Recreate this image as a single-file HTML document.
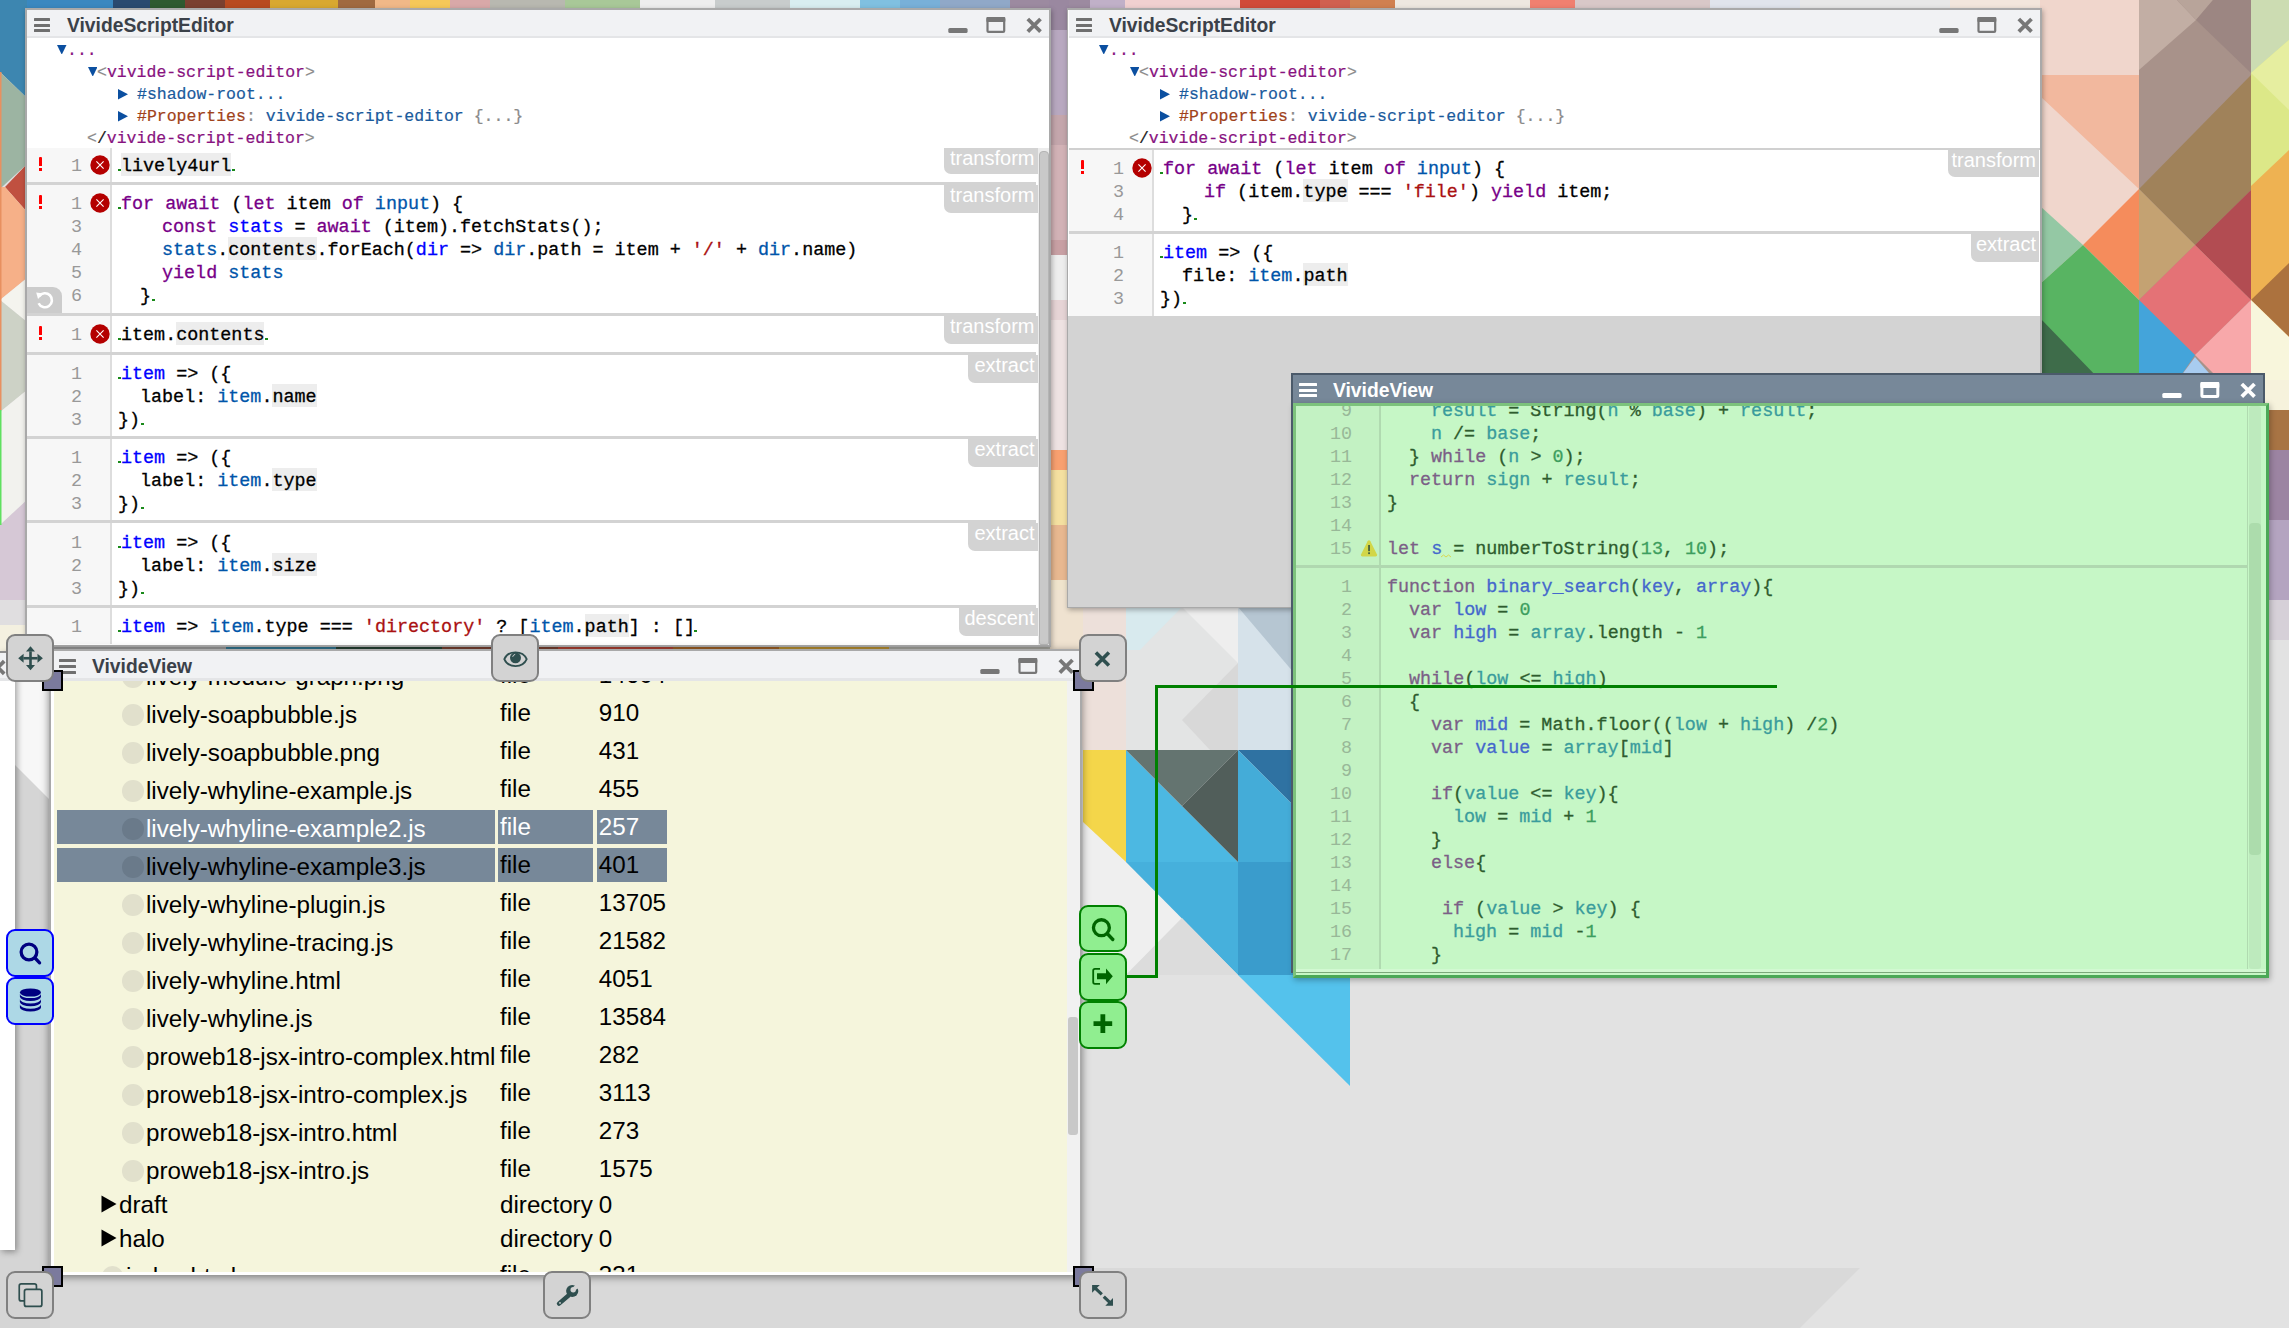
<!DOCTYPE html><html><head><meta charset="utf-8"><style>html,body{margin:0;padding:0;}body{width:2289px;height:1328px;overflow:hidden;position:relative;background:#e2e2e2;}.a{position:absolute;}.cl{position:absolute;font-family:'Liberation Mono',monospace;font-size:18.4px;line-height:23px;white-space:pre;color:#000;}.cl span{display:inline-block;line-height:23px;-webkit-text-stroke:0.3px currentColor;}.ins{position:absolute;font-family:'Liberation Mono',monospace;font-size:16.5px;line-height:22px;white-space:pre;-webkit-text-stroke:0.2px currentColor;}.row{position:absolute;font-family:'Liberation Sans',sans-serif;font-size:24.2px;line-height:38px;white-space:pre;}.ttl{position:absolute;font-family:'Liberation Sans',sans-serif;font-weight:bold;font-size:19.3px;line-height:26px;white-space:pre;}.lbl{position:absolute;height:26px;background:#d3d3d3;border-bottom-left-radius:7px;color:#fff;font-family:'Liberation Sans',sans-serif;font-size:20px;line-height:20px;padding-top:0px;text-align:right;box-sizing:border-box;padding-right:3px;white-space:pre;}</style></head><body>
<svg class="a" style="left:0;top:0" width="2289" height="1328" viewBox="0 0 2289 1328"><rect x="0" y="0" width="2289" height="1328" fill="#e2e2e2"/>
<polygon points="0,1268 1860,1268 1800,1328 0,1328" fill="#d9d9d9"/>
<rect x="0" y="651" width="50" height="677" fill="#d5d5d5"/>
<polygon points="15,651 50,651 50,800 15,765" fill="#f7f7f7"/>
<rect x="0" y="0" width="113" height="12" fill="#3a88c0"/>
<rect x="113" y="0" width="37" height="12" fill="#2a4a70"/>
<rect x="150" y="0" width="35" height="12" fill="#2e5a30"/>
<rect x="185" y="0" width="40" height="12" fill="#7a4030"/>
<rect x="225" y="0" width="45" height="12" fill="#b84a20"/>
<rect x="270" y="0" width="68" height="12" fill="#d8a830"/>
<rect x="338" y="0" width="37" height="12" fill="#a06a40"/>
<rect x="375" y="0" width="35" height="12" fill="#f0b888"/>
<rect x="410" y="0" width="40" height="12" fill="#f5c858"/>
<rect x="450" y="0" width="40" height="12" fill="#d8a8a8"/>
<rect x="490" y="0" width="75" height="12" fill="#b8b8b0"/>
<rect x="565" y="0" width="75" height="12" fill="#a8c898"/>
<rect x="640" y="0" width="75" height="12" fill="#eeeeee"/>
<rect x="715" y="0" width="75" height="12" fill="#c8cccc"/>
<rect x="790" y="0" width="70" height="12" fill="#d8eef0"/>
<rect x="860" y="0" width="40" height="12" fill="#80c0e0"/>
<rect x="900" y="0" width="40" height="12" fill="#78b0d8"/>
<rect x="940" y="0" width="70" height="12" fill="#90a8c8"/>
<rect x="1010" y="0" width="80" height="12" fill="#9c8aa0"/>
<rect x="1090" y="0" width="35" height="12" fill="#c0b0c8"/>
<rect x="1125" y="0" width="115" height="12" fill="#f0d0d0"/>
<rect x="1240" y="0" width="80" height="12" fill="#d04a38"/>
<rect x="1320" y="0" width="30" height="12" fill="#d06050"/>
<rect x="1350" y="0" width="45" height="12" fill="#d08050"/>
<rect x="1395" y="0" width="135" height="12" fill="#eee8e0"/>
<rect x="1530" y="0" width="45" height="12" fill="#f08070"/>
<rect x="1575" y="0" width="135" height="12" fill="#d8c8c8"/>
<rect x="1710" y="0" width="90" height="12" fill="#e0e4ec"/>
<rect x="1800" y="0" width="150" height="12" fill="#e8e8e8"/>
<rect x="1950" y="0" width="190" height="12" fill="#f2e6dc"/>
<rect x="2140" y="0" width="110" height="12" fill="#b0988e"/>
<rect x="2250" y="0" width="39" height="12" fill="#d8e8b8"/>
<rect x="0" y="0" width="27" height="651" fill="#e0dee0"/>
<polygon points="0,0 27,0 27,98 0,72" fill="#3d86b0"/>
<polygon points="0,72 27,98 27,164 2,187 0,187" fill="#9cb4a2"/>
<polygon points="27,164 5,187 27,212" fill="#c05040"/>
<polygon points="0,187 5,187 27,212 27,278 0,300" fill="#f6b088"/>
<polygon points="27,278 0,300 27,322" fill="#f4f4ee"/>
<polygon points="0,300 27,322 27,390 0,412" fill="#cdd2c6"/>
<polygon points="0,412 27,390 27,500 0,525" fill="#f2f2ee"/>
<polygon points="0,525 27,500 27,600 0,600" fill="#d6c8d6"/>
<rect x="0" y="625" width="27" height="26" fill="#f4f0e0"/>
<rect x="0" y="72" width="1.5" height="338" fill="#e89060"/>
<rect x="0" y="410" width="1.5" height="115" fill="#60e060"/>
<rect x="1049" y="0" width="20" height="30" fill="#9a88a0"/>
<rect x="1049" y="30" width="20" height="85" fill="#b8a8c0"/>
<rect x="1049" y="115" width="20" height="30" fill="#c4a6ac"/>
<rect x="1049" y="145" width="20" height="95" fill="#d2b2b6"/>
<rect x="1049" y="240" width="20" height="15" fill="#c8a0a4"/>
<rect x="1049" y="255" width="20" height="45" fill="#eeeeee"/>
<rect x="1049" y="300" width="20" height="20" fill="#e6d4d6"/>
<rect x="1049" y="320" width="20" height="130" fill="#eee2e2"/>
<rect x="1049" y="450" width="20" height="20" fill="#f8a070"/>
<rect x="1049" y="470" width="20" height="55" fill="#f4e0a0"/>
<rect x="1049" y="525" width="20" height="55" fill="#e8b890"/>
<rect x="1049" y="580" width="20" height="71" fill="#efe4cc"/>
<rect x="25" y="645" width="201" height="6" fill="#b4b4b4"/>
<rect x="226" y="645" width="110" height="6" fill="#3a88a8"/>
<rect x="336" y="645" width="106" height="6" fill="#2a4a3a"/>
<rect x="442" y="645" width="116" height="6" fill="#8a4a38"/>
<rect x="558" y="645" width="115" height="6" fill="#c84a3a"/>
<rect x="673" y="645" width="106" height="6" fill="#b8702a"/>
<rect x="779" y="645" width="110" height="6" fill="#d8a838"/>
<rect x="889" y="645" width="162" height="6" fill="#c0c0b8"/>
<rect x="2040" y="0" width="99" height="380" fill="#f0d6cc"/>
<polygon points="2040,75 2139,75 2139,189 2040,96" fill="#f2b89e"/>
<polygon points="2040,206 2083,245 2040,284" fill="#94c8a4"/>
<polygon points="2083,245 2139,189 2139,300" fill="#f58c5c"/>
<polygon points="2040,284 2083,245 2139,300 2139,380 2040,380" fill="#58b462"/>
<polygon points="2040,318 2100,380 2040,380" fill="#3e6c4a"/>
<rect x="2139" y="0" width="112" height="380" fill="#a8928a"/>
<polygon points="2139,0 2177,0 2196,20 2139,70" fill="#c2aea4"/>
<polygon points="2177,0 2213,0 2196,20" fill="#b8a49a"/>
<polygon points="2196,20 2213,0 2251,0 2251,73" fill="#9c8682"/>
<polygon points="2139,189 2251,75 2251,190 2195,245" fill="#a0825a"/>
<polygon points="2139,189 2195,245 2139,300" fill="#c4a272"/>
<polygon points="2195,245 2251,190 2251,300" fill="#b24c52"/>
<polygon points="2139,300 2195,245 2251,300 2195,355" fill="#e47276"/>
<polygon points="2139,300 2195,355 2178,380 2139,380" fill="#44a4da"/>
<polygon points="2195,355 2251,300 2251,380 2220,380" fill="#f8a8aa"/>
<polygon points="2178,380 2195,357 2215,380" fill="#a8ccf0"/>
<rect x="2251" y="0" width="38" height="380" fill="#dce888"/>
<polygon points="2251,0 2289,0 2289,40 2251,73" fill="#ccdcb2"/>
<polygon points="2251,73 2289,40 2289,110" fill="#e6eea0"/>
<polygon points="2251,186 2289,150 2289,380 2251,300" fill="#eeb252"/>
<polygon points="2251,300 2289,263 2289,337" fill="#ac723e"/>
<polygon points="2251,300 2289,337 2289,380 2251,380" fill="#f8f6dc"/>
<rect x="2265" y="380" width="24" height="30" fill="#f6f2dc"/>
<rect x="2265" y="410" width="24" height="40" fill="#a87444"/>
<rect x="2265" y="450" width="24" height="70" fill="#9c84a2"/>
<rect x="2265" y="520" width="24" height="80" fill="#b4a4c0"/>
<rect x="2265" y="600" width="24" height="40" fill="#d6d0d8"/>
<rect x="1050" y="590" width="250" height="160" fill="#e3e4e4"/>
<polygon points="1050,590 1126,590 1126,750 1083,750" fill="#ede0da"/>
<rect x="1050" y="590" width="33" height="60" fill="#efe2d0"/>
<polygon points="1126,607 1182,607 1140,650 1126,650" fill="#d8eaee"/>
<polygon points="1182,607 1238,607 1238,663" fill="#eeeeee"/>
<polygon points="1238,607 1300,607 1300,750 1238,750" fill="#d6e2ea"/>
<polygon points="1238,607 1300,607 1300,680" fill="#b6c6d2"/>
<polygon points="1182,720 1238,663 1238,750 1210,750" fill="#d8d8d8"/>
<rect x="1083" y="750" width="43" height="112" fill="#f4d64a"/>
<polygon points="1083,822 1126,862 1182,918 1126,975 1083,975" fill="#efefef"/>
<polygon points="1126,750 1126,862 1238,862" fill="#4cb8e2"/>
<polygon points="1126,750 1238,750 1182,806" fill="#647470"/>
<polygon points="1182,806 1238,750 1238,862" fill="#515e5a"/>
<polygon points="1238,750 1350,750 1350,862" fill="#2f72a2"/>
<polygon points="1238,750 1238,862 1350,862" fill="#44acd8"/>
<polygon points="1126,862 1238,862 1238,975" fill="#46b0dc"/>
<polygon points="1238,862 1350,862 1350,975 1238,975" fill="#3a9ccc"/>
<polygon points="1238,975 1350,975 1350,1086" fill="#54c2ec"/>
<polygon points="1182,918 1238,975 1126,975" fill="#dcdcdc"/></svg>
<div class="a" style="left:0px;top:651px;width:15px;height:599px;background:#ffffff;box-shadow:2px 2px 6px rgba(0,0,0,0.35);"></div>
<div class="a" style="left:0px;top:651px;width:15px;height:1.6000000000000227px;background:#8f8f8f;"></div>
<div class="a" style="left:0px;top:652.6px;width:15px;height:25.399999999999977px;background:#f1f2f4;"></div>
<div class="a" style="left:0px;top:678px;width:15px;height:3px;background:#e4e5e7;"></div>
<svg class="a" style="left:-10px;top:659px" width="18" height="18" viewBox="0 0 18 18"><path d="M1.5 2.2 L14.2 14.8 M14.2 2.2 L1.5 14.8" stroke="#777" stroke-width="3.8"/></svg>
<div class="a" style="left:25px;top:8px;width:1026px;height:639px;background:#a9a9a9;box-shadow:1px 2px 5px rgba(0,0,0,0.3);"></div>
<div class="a" style="left:27px;top:10px;width:1022px;height:635px;background:#ffffff;"></div>
<div class="a" style="left:27px;top:10px;width:1022px;height:26px;background:#f1f2f4;"></div>
<div class="a" style="left:27px;top:36px;width:1022px;height:2px;background:#e4e5e7;"></div>
<div class="a" style="left:34px;top:18px;width:16.299999999999997px;height:3px;background:#6f6f6f;border-radius:0.5px;"></div>
<div class="a" style="left:34px;top:23.6px;width:16.299999999999997px;height:3.0px;background:#6f6f6f;border-radius:0.5px;"></div>
<div class="a" style="left:34px;top:29.2px;width:16.299999999999997px;height:3.0000000000000036px;background:#6f6f6f;border-radius:0.5px;"></div>
<div class="ttl" style="left:67px;top:13px;color:#3b4149">VivideScriptEditor</div>
<svg class="a" style="left:945px;top:8px" width="106" height="28" viewBox="0 0 106 28"><rect x="3.3" y="20" width="19.3" height="5" rx="1.6" fill="#777777"/><rect x="42.5" y="10.1" width="16.7" height="13.8" rx="1" fill="none" stroke="#777777" stroke-width="2.2"/><rect x="41.4" y="9" width="18.9" height="5.0" rx="1" fill="#777777"/><path d="M82.8 11 L95.5 23.6 M95.5 11 L82.8 23.6" stroke="#777777" stroke-width="3.8"/></svg>
<svg class="a" style="left:57.3px;top:44.8px" width="9.5" height="9.7" viewBox="0 0 9.5 9.7"><path d="M0 0 L9.5 0 L4.75 9.7 Z" fill="#0b4fa0"/></svg>
<div class="ins" style="left:67px;top:40px"><span style="color:#881280;">...</span></div>
<svg class="a" style="left:87.7px;top:66.8px" width="9.5" height="9.7" viewBox="0 0 9.5 9.7"><path d="M0 0 L9.5 0 L4.75 9.7 Z" fill="#0b4fa0"/></svg>
<div class="ins" style="left:97px;top:62px"><span style="color:#8a8a8a;">&lt;</span><span style="color:#881280;">vivide-script-editor</span><span style="color:#8a8a8a;">&gt;</span></div>
<svg class="a" style="left:117.5px;top:89px" width="10" height="10.6" viewBox="0 0 10 10.6"><path d="M0 0 L10 5.3 L0 10.6 Z" fill="#0b4fa0"/></svg>
<div class="ins" style="left:137px;top:84px"><span style="color:#1a5a9c;">#shadow-root...</span></div>
<svg class="a" style="left:117.5px;top:111px" width="10" height="10.6" viewBox="0 0 10 10.6"><path d="M0 0 L10 5.3 L0 10.6 Z" fill="#0b4fa0"/></svg>
<div class="ins" style="left:137px;top:106px"><span style="color:#a0421a;">#Properties</span><span style="color:#8a8a8a;">: </span><span style="color:#1a5a9c;">vivide-script-editor</span><span style="color:#8a8a8a;"> {...}</span></div>
<div class="ins" style="left:87px;top:128px"><span style="color:#8a8a8a;">&lt;</span><span style="color:#222;">/</span><span style="color:#881280;">vivide-script-editor</span><span style="color:#8a8a8a;">&gt;</span></div>
<div class="a" style="left:27px;top:148px;width:83px;height:34px;background:#f7f7f7;"></div>
<div class="a" style="left:110px;top:148px;width:2px;height:34px;background:#dddddd;"></div>
<div class="a" style="left:27px;top:182px;width:1009px;height:3px;background:#d3d3d3;"></div>
<div class="cl" style="left:22px;width:60px;text-align:right;top:155px;color:#999999">1</div>
<div class="a" style="left:118px;top:169.4px;width:3px;height:1.5999999999999943px;background:#1a8a1a;"></div>
<div class="cl" style="left:121px;top:155px"><span style="color:#000000;background:#ededed;height:21px;box-shadow:0 -2px 0 #ededed;">lively4url</span></div>
<div class="a" style="left:232px;top:169.4px;width:3px;height:1.5999999999999943px;background:#1a8a1a;"></div>
<div class="a" style="left:39px;top:157px;width:3px;height:9px;background:#ff0000;border-radius:1px 1px 0 0;"></div>
<div class="a" style="left:39px;top:168px;width:3px;height:3px;background:#ff0000;"></div>
<svg class="a" style="left:89.7px;top:155px" width="20" height="20" viewBox="0 0 20 20"><circle cx="10" cy="10" r="9.7" fill="#b40000"/><path d="M6.4 6.4 L13.6 13.6 M13.6 6.4 L6.4 13.6" stroke="#fff" stroke-width="1.1"/></svg>
<div class="lbl" style="left:944.0px;top:148px;width:93.5px;height:26px">transform</div>
<div class="a" style="left:27px;top:185px;width:83px;height:128px;background:#f7f7f7;"></div>
<div class="a" style="left:110px;top:185px;width:2px;height:128px;background:#dddddd;"></div>
<div class="a" style="left:27px;top:313px;width:1009px;height:3px;background:#d3d3d3;"></div>
<div class="cl" style="left:22px;width:60px;text-align:right;top:193px;color:#999999">1</div>
<div class="a" style="left:118px;top:207.4px;width:3px;height:1.5999999999999943px;background:#1a8a1a;"></div>
<div class="cl" style="left:121px;top:193px"><span style="color:#770088;">for</span><span style="color:#770088;"> await</span><span style="color:#000000;"> (</span><span style="color:#770088;">let</span><span style="color:#000000;"> item </span><span style="color:#770088;">of</span><span style="color:#000000;"> </span><span style="color:#0055aa;">input</span><span style="color:#000000;">) {</span></div>
<div class="cl" style="left:22px;width:60px;text-align:right;top:216px;color:#999999">3</div>
<div class="cl" style="left:162px;top:216px"><span style="color:#770088;">const</span><span style="color:#000000;"> </span><span style="color:#0000ff;">stats</span><span style="color:#000000;"> = </span><span style="color:#770088;">await</span><span style="color:#000000;"> (item).fetchStats();</span></div>
<div class="cl" style="left:22px;width:60px;text-align:right;top:239px;color:#999999">4</div>
<div class="cl" style="left:162px;top:239px"><span style="color:#0055aa;">stats</span><span style="color:#000000;">.</span><span style="color:#000000;background:#ededed;height:21px;box-shadow:0 -2px 0 #ededed;">contents</span><span style="color:#000000;">.forEach(</span><span style="color:#0000ff;">dir</span><span style="color:#000000;"> =&gt; </span><span style="color:#0055aa;">dir</span><span style="color:#000000;">.path = item + </span><span style="color:#aa1111;">'/'</span><span style="color:#000000;"> + </span><span style="color:#0055aa;">dir</span><span style="color:#000000;">.name)</span></div>
<div class="cl" style="left:22px;width:60px;text-align:right;top:262px;color:#999999">5</div>
<div class="cl" style="left:162px;top:262px"><span style="color:#770088;">yield</span><span style="color:#000000;"> </span><span style="color:#0055aa;">stats</span></div>
<div class="cl" style="left:22px;width:60px;text-align:right;top:285px;color:#999999">6</div>
<div class="cl" style="left:140px;top:285px"><span style="color:#000000;">}</span></div>
<div class="a" style="left:152px;top:299.4px;width:3px;height:1.6000000000000227px;background:#1a8a1a;"></div>
<div class="a" style="left:39px;top:195px;width:3px;height:9px;background:#ff0000;border-radius:1px 1px 0 0;"></div>
<div class="a" style="left:39px;top:206px;width:3px;height:3px;background:#ff0000;"></div>
<svg class="a" style="left:89.7px;top:193px" width="20" height="20" viewBox="0 0 20 20"><circle cx="10" cy="10" r="9.7" fill="#b40000"/><path d="M6.4 6.4 L13.6 13.6 M13.6 6.4 L6.4 13.6" stroke="#fff" stroke-width="1.1"/></svg>
<div class="lbl" style="left:944.0px;top:185px;width:93.5px;height:28px">transform</div>
<div class="a" style="left:27px;top:287px;width:35px;height:26px;background:#cccccc;border-top-right-radius:9px;"></div>
<svg class="a" style="left:34px;top:289px" width="22" height="22" viewBox="0 0 22 22"><path d="M5.2 7.2 A7 7 0 1 1 4.6 14.2" fill="none" stroke="#fff" stroke-width="2.6"/><path d="M2.2 3.6 L9.4 4.4 L4.0 10.0 Z" fill="#fff"/></svg>
<div class="a" style="left:27px;top:316px;width:83px;height:36px;background:#f7f7f7;"></div>
<div class="a" style="left:110px;top:316px;width:2px;height:36px;background:#dddddd;"></div>
<div class="a" style="left:27px;top:352px;width:1009px;height:3px;background:#d3d3d3;"></div>
<div class="cl" style="left:22px;width:60px;text-align:right;top:324px;color:#999999">1</div>
<div class="a" style="left:118px;top:338.4px;width:3px;height:1.6000000000000227px;background:#1a8a1a;"></div>
<div class="cl" style="left:121px;top:324px"><span style="color:#000000;">item.</span><span style="color:#000000;background:#ededed;height:21px;box-shadow:0 -2px 0 #ededed;">contents</span></div>
<div class="a" style="left:265px;top:338.4px;width:3px;height:1.6000000000000227px;background:#1a8a1a;"></div>
<div class="a" style="left:39px;top:326px;width:3px;height:9px;background:#ff0000;border-radius:1px 1px 0 0;"></div>
<div class="a" style="left:39px;top:337px;width:3px;height:3px;background:#ff0000;"></div>
<svg class="a" style="left:89.7px;top:324px" width="20" height="20" viewBox="0 0 20 20"><circle cx="10" cy="10" r="9.7" fill="#b40000"/><path d="M6.4 6.4 L13.6 13.6 M13.6 6.4 L6.4 13.6" stroke="#fff" stroke-width="1.1"/></svg>
<div class="lbl" style="left:944.0px;top:316px;width:93.5px;height:28px">transform</div>
<div class="a" style="left:27px;top:355px;width:83px;height:81px;background:#f7f7f7;"></div>
<div class="a" style="left:110px;top:355px;width:2px;height:81px;background:#dddddd;"></div>
<div class="a" style="left:27px;top:436px;width:1009px;height:3px;background:#d3d3d3;"></div>
<div class="cl" style="left:22px;width:60px;text-align:right;top:363px;color:#999999">1</div>
<div class="a" style="left:118px;top:377.4px;width:3px;height:1.6000000000000227px;background:#1a8a1a;"></div>
<div class="cl" style="left:121px;top:363px"><span style="color:#0000ff;">item</span><span style="color:#000000;"> =&gt; ({</span></div>
<div class="cl" style="left:22px;width:60px;text-align:right;top:386px;color:#999999">2</div>
<div class="cl" style="left:140px;top:386px"><span style="color:#000000;">label: </span><span style="color:#0055aa;">item</span><span style="color:#000000;">.</span><span style="color:#000000;background:#ededed;height:21px;box-shadow:0 -2px 0 #ededed;">name</span></div>
<div class="cl" style="left:22px;width:60px;text-align:right;top:409px;color:#999999">3</div>
<div class="cl" style="left:118px;top:409px"><span style="color:#000000;">})</span></div>
<div class="a" style="left:141px;top:423.4px;width:3px;height:1.6000000000000227px;background:#1a8a1a;"></div>
<div class="lbl" style="left:968.0px;top:355px;width:69.5px;height:28px">extract</div>
<div class="a" style="left:27px;top:439px;width:83px;height:81px;background:#f7f7f7;"></div>
<div class="a" style="left:110px;top:439px;width:2px;height:81px;background:#dddddd;"></div>
<div class="a" style="left:27px;top:520px;width:1009px;height:3px;background:#d3d3d3;"></div>
<div class="cl" style="left:22px;width:60px;text-align:right;top:447px;color:#999999">1</div>
<div class="a" style="left:118px;top:461.4px;width:3px;height:1.6000000000000227px;background:#1a8a1a;"></div>
<div class="cl" style="left:121px;top:447px"><span style="color:#0000ff;">item</span><span style="color:#000000;"> =&gt; ({</span></div>
<div class="cl" style="left:22px;width:60px;text-align:right;top:470px;color:#999999">2</div>
<div class="cl" style="left:140px;top:470px"><span style="color:#000000;">label: </span><span style="color:#0055aa;">item</span><span style="color:#000000;">.</span><span style="color:#000000;background:#ededed;height:21px;box-shadow:0 -2px 0 #ededed;">type</span></div>
<div class="cl" style="left:22px;width:60px;text-align:right;top:493px;color:#999999">3</div>
<div class="cl" style="left:118px;top:493px"><span style="color:#000000;">})</span></div>
<div class="a" style="left:141px;top:507.4px;width:3px;height:1.6000000000000227px;background:#1a8a1a;"></div>
<div class="lbl" style="left:968.0px;top:439px;width:69.5px;height:28px">extract</div>
<div class="a" style="left:27px;top:523px;width:83px;height:82px;background:#f7f7f7;"></div>
<div class="a" style="left:110px;top:523px;width:2px;height:82px;background:#dddddd;"></div>
<div class="a" style="left:27px;top:605px;width:1009px;height:3px;background:#d3d3d3;"></div>
<div class="cl" style="left:22px;width:60px;text-align:right;top:532px;color:#999999">1</div>
<div class="a" style="left:118px;top:546.4px;width:3px;height:1.6000000000000227px;background:#1a8a1a;"></div>
<div class="cl" style="left:121px;top:532px"><span style="color:#0000ff;">item</span><span style="color:#000000;"> =&gt; ({</span></div>
<div class="cl" style="left:22px;width:60px;text-align:right;top:555px;color:#999999">2</div>
<div class="cl" style="left:140px;top:555px"><span style="color:#000000;">label: </span><span style="color:#0055aa;">item</span><span style="color:#000000;">.</span><span style="color:#000000;background:#ededed;height:21px;box-shadow:0 -2px 0 #ededed;">size</span></div>
<div class="cl" style="left:22px;width:60px;text-align:right;top:578px;color:#999999">3</div>
<div class="cl" style="left:118px;top:578px"><span style="color:#000000;">})</span></div>
<div class="a" style="left:141px;top:592.4px;width:3px;height:1.6000000000000227px;background:#1a8a1a;"></div>
<div class="lbl" style="left:968.0px;top:523px;width:69.5px;height:28px">extract</div>
<div class="a" style="left:27px;top:608px;width:83px;height:36px;background:#f7f7f7;"></div>
<div class="a" style="left:110px;top:608px;width:2px;height:36px;background:#dddddd;"></div>
<div class="cl" style="left:22px;width:60px;text-align:right;top:616px;color:#999999">1</div>
<div class="a" style="left:118px;top:630.4px;width:3px;height:1.6000000000000227px;background:#1a8a1a;"></div>
<div class="cl" style="left:121px;top:616px"><span style="color:#0000ff;">item</span><span style="color:#000000;"> =&gt; </span><span style="color:#0055aa;">item</span><span style="color:#000000;">.type === </span><span style="color:#aa1111;">'directory'</span><span style="color:#000000;"> ? [</span><span style="color:#0055aa;">item</span><span style="color:#000000;">.</span><span style="color:#000000;background:#ededed;height:21px;box-shadow:0 -2px 0 #ededed;">path</span><span style="color:#000000;">] : []</span></div>
<div class="a" style="left:694px;top:630.4px;width:3px;height:1.6000000000000227px;background:#1a8a1a;"></div>
<div class="lbl" style="left:959.0px;top:608px;width:78.5px;height:28px">descent</div>
<div class="a" style="left:1037.5px;top:148px;width:11.5px;height:497px;background:#ececec;"></div>
<div class="a" style="left:1038.5px;top:151px;width:10.5px;height:494px;background:#c9c9c9;border:1px solid #b4b4b4;border-radius:4px 4px 2px 2px;box-sizing:border-box;"></div>
<div class="a" style="left:1067px;top:8px;width:975px;height:600px;background:#a9a9a9;box-shadow:1px 2px 5px rgba(0,0,0,0.3);"></div>
<div class="a" style="left:1068px;top:10px;width:972px;height:597px;background:#ffffff;"></div>
<div class="a" style="left:1069px;top:10px;width:971px;height:26px;background:#f1f2f4;"></div>
<div class="a" style="left:1069px;top:36px;width:971px;height:2px;background:#e4e5e7;"></div>
<div class="a" style="left:1076px;top:18px;width:16.299999999999955px;height:3px;background:#6f6f6f;border-radius:0.5px;"></div>
<div class="a" style="left:1076px;top:23.6px;width:16.299999999999955px;height:3.0px;background:#6f6f6f;border-radius:0.5px;"></div>
<div class="a" style="left:1076px;top:29.2px;width:16.299999999999955px;height:3.0000000000000036px;background:#6f6f6f;border-radius:0.5px;"></div>
<div class="ttl" style="left:1109px;top:13px;color:#3b4149">VivideScriptEditor</div>
<svg class="a" style="left:1936px;top:8px" width="106" height="28" viewBox="0 0 106 28"><rect x="3.3" y="20" width="19.3" height="5" rx="1.6" fill="#777777"/><rect x="42.5" y="10.1" width="16.7" height="13.8" rx="1" fill="none" stroke="#777777" stroke-width="2.2"/><rect x="41.4" y="9" width="18.9" height="5.0" rx="1" fill="#777777"/><path d="M82.8 11 L95.5 23.6 M95.5 11 L82.8 23.6" stroke="#777777" stroke-width="3.8"/></svg>
<svg class="a" style="left:1099.3px;top:44.8px" width="9.5" height="9.7" viewBox="0 0 9.5 9.7"><path d="M0 0 L9.5 0 L4.75 9.7 Z" fill="#0b4fa0"/></svg>
<div class="ins" style="left:1109px;top:40px"><span style="color:#881280;">...</span></div>
<svg class="a" style="left:1129.7px;top:66.8px" width="9.5" height="9.7" viewBox="0 0 9.5 9.7"><path d="M0 0 L9.5 0 L4.75 9.7 Z" fill="#0b4fa0"/></svg>
<div class="ins" style="left:1139px;top:62px"><span style="color:#8a8a8a;">&lt;</span><span style="color:#881280;">vivide-script-editor</span><span style="color:#8a8a8a;">&gt;</span></div>
<svg class="a" style="left:1159.5px;top:89px" width="10" height="10.6" viewBox="0 0 10 10.6"><path d="M0 0 L10 5.3 L0 10.6 Z" fill="#0b4fa0"/></svg>
<div class="ins" style="left:1179px;top:84px"><span style="color:#1a5a9c;">#shadow-root...</span></div>
<svg class="a" style="left:1159.5px;top:111px" width="10" height="10.6" viewBox="0 0 10 10.6"><path d="M0 0 L10 5.3 L0 10.6 Z" fill="#0b4fa0"/></svg>
<div class="ins" style="left:1179px;top:106px"><span style="color:#a0421a;">#Properties</span><span style="color:#8a8a8a;">: </span><span style="color:#1a5a9c;">vivide-script-editor</span><span style="color:#8a8a8a;"> {...}</span></div>
<div class="ins" style="left:1129px;top:128px"><span style="color:#8a8a8a;">&lt;</span><span style="color:#222;">/</span><span style="color:#881280;">vivide-script-editor</span><span style="color:#8a8a8a;">&gt;</span></div>
<div class="a" style="left:1069px;top:148px;width:971px;height:2px;background:#d0d0d0;"></div>
<div class="a" style="left:1069px;top:150px;width:83px;height:81px;background:#f7f7f7;"></div>
<div class="a" style="left:1152px;top:150px;width:2px;height:81px;background:#dddddd;"></div>
<div class="a" style="left:1069px;top:231px;width:970px;height:3px;background:#d3d3d3;"></div>
<div class="cl" style="left:1064px;width:60px;text-align:right;top:158px;color:#999999">1</div>
<div class="a" style="left:1160px;top:172.4px;width:3px;height:1.5999999999999943px;background:#1a8a1a;"></div>
<div class="cl" style="left:1163px;top:158px"><span style="color:#770088;">for</span><span style="color:#770088;"> await</span><span style="color:#000000;"> (</span><span style="color:#770088;">let</span><span style="color:#000000;"> item </span><span style="color:#770088;">of</span><span style="color:#000000;"> </span><span style="color:#0055aa;">input</span><span style="color:#000000;">) {</span></div>
<div class="cl" style="left:1064px;width:60px;text-align:right;top:181px;color:#999999">3</div>
<div class="cl" style="left:1204px;top:181px"><span style="color:#770088;">if</span><span style="color:#000000;"> (item.</span><span style="color:#000000;background:#ededed;height:21px;box-shadow:0 -2px 0 #ededed;">type</span><span style="color:#000000;"> === </span><span style="color:#aa1111;">'file'</span><span style="color:#000000;">) </span><span style="color:#770088;">yield</span><span style="color:#000000;"> item;</span></div>
<div class="cl" style="left:1064px;width:60px;text-align:right;top:204px;color:#999999">4</div>
<div class="cl" style="left:1182px;top:204px"><span style="color:#000000;">}</span></div>
<div class="a" style="left:1194px;top:218.4px;width:3px;height:1.5999999999999943px;background:#1a8a1a;"></div>
<div class="a" style="left:1081px;top:160px;width:3px;height:9px;background:#ff0000;border-radius:1px 1px 0 0;"></div>
<div class="a" style="left:1081px;top:171px;width:3px;height:3px;background:#ff0000;"></div>
<svg class="a" style="left:1131.7px;top:158px" width="20" height="20" viewBox="0 0 20 20"><circle cx="10" cy="10" r="9.7" fill="#b40000"/><path d="M6.4 6.4 L13.6 13.6 M13.6 6.4 L6.4 13.6" stroke="#fff" stroke-width="1.1"/></svg>
<div class="lbl" style="left:1948px;top:150px;width:91px;height:27px">transform</div>
<div class="a" style="left:1069px;top:234px;width:83px;height:82px;background:#f7f7f7;"></div>
<div class="a" style="left:1152px;top:234px;width:2px;height:82px;background:#dddddd;"></div>
<div class="cl" style="left:1064px;width:60px;text-align:right;top:242px;color:#999999">1</div>
<div class="a" style="left:1160px;top:256.4px;width:3px;height:1.6000000000000227px;background:#1a8a1a;"></div>
<div class="cl" style="left:1163px;top:242px"><span style="color:#0000ff;">item</span><span style="color:#000000;"> =&gt; ({</span></div>
<div class="cl" style="left:1064px;width:60px;text-align:right;top:265px;color:#999999">2</div>
<div class="cl" style="left:1182px;top:265px"><span style="color:#000000;">file: </span><span style="color:#0055aa;">item</span><span style="color:#000000;">.</span><span style="color:#000000;background:#ededed;height:21px;box-shadow:0 -2px 0 #ededed;">path</span></div>
<div class="cl" style="left:1064px;width:60px;text-align:right;top:288px;color:#999999">3</div>
<div class="cl" style="left:1160px;top:288px"><span style="color:#000000;">})</span></div>
<div class="a" style="left:1183px;top:302.4px;width:3px;height:1.6000000000000227px;background:#1a8a1a;"></div>
<div class="lbl" style="left:1971px;top:234px;width:68px;height:28px">extract</div>
<div class="a" style="left:1068px;top:316px;width:972px;height:291px;background:#d3d3d3;"></div>
<div class="a" style="left:49px;top:649px;width:1033px;height:626px;background:#a9a9a9;box-shadow:0 2px 8px rgba(0,0,0,0.45);"></div>
<div class="a" style="left:51px;top:651px;width:1029px;height:624px;background:#ffffff;"></div>
<div class="a" style="left:51px;top:651px;width:1029px;height:27px;background:#f1f2f4;"></div>
<div class="a" style="left:51px;top:678px;width:1029px;height:3px;background:#e4e5e7;"></div>
<div class="a" style="left:54px;top:681px;width:1013px;height:591px;overflow:hidden;background:#f5f5dc">
<div class="a" style="left:-54px;top:-681px;width:1200px;height:1400px">
<div class="a" style="left:122.45000000000002px;top:666.15px;width:21.7px;height:21.7px;border-radius:50%;background:#e1e0cc"></div>
<div class="row" style="left:146px;top:658px;color:#000000">lively-module-graph.png</div>
<div class="row" style="left:500px;top:656px;color:#000000">file</div>
<div class="row" style="left:598.8px;top:656px;color:#000000">14604</div>
<div class="a" style="left:122.45000000000002px;top:704.15px;width:21.7px;height:21.7px;border-radius:50%;background:#e1e0cc"></div>
<div class="row" style="left:146px;top:696px;color:#000000">lively-soapbubble.js</div>
<div class="row" style="left:500px;top:694px;color:#000000">file</div>
<div class="row" style="left:598.8px;top:694px;color:#000000">910</div>
<div class="a" style="left:122.45000000000002px;top:742.15px;width:21.7px;height:21.7px;border-radius:50%;background:#e1e0cc"></div>
<div class="row" style="left:146px;top:734px;color:#000000">lively-soapbubble.png</div>
<div class="row" style="left:500px;top:732px;color:#000000">file</div>
<div class="row" style="left:598.8px;top:732px;color:#000000">431</div>
<div class="a" style="left:122.45000000000002px;top:780.15px;width:21.7px;height:21.7px;border-radius:50%;background:#e1e0cc"></div>
<div class="row" style="left:146px;top:772px;color:#000000">lively-whyline-example.js</div>
<div class="row" style="left:500px;top:770px;color:#000000">file</div>
<div class="row" style="left:598.8px;top:770px;color:#000000">455</div>
<div class="a" style="left:57px;top:810px;width:437.5px;height:34px;background:#778899;"></div>
<div class="a" style="left:498px;top:810px;width:95px;height:34px;background:#778899;"></div>
<div class="a" style="left:597px;top:810px;width:69.70000000000005px;height:34px;background:#778899;"></div>
<div class="a" style="left:122.45000000000002px;top:818.15px;width:21.7px;height:21.7px;border-radius:50%;background:#6a7a8a"></div>
<div class="row" style="left:146px;top:810px;color:#ffffff">lively-whyline-example2.js</div>
<div class="row" style="left:500px;top:808px;color:#ffffff">file</div>
<div class="row" style="left:598.8px;top:808px;color:#ffffff">257</div>
<div class="a" style="left:57px;top:848px;width:437.5px;height:34px;background:#778899;"></div>
<div class="a" style="left:498px;top:848px;width:95px;height:34px;background:#778899;"></div>
<div class="a" style="left:597px;top:848px;width:69.70000000000005px;height:34px;background:#778899;"></div>
<div class="a" style="left:122.45000000000002px;top:856.15px;width:21.7px;height:21.7px;border-radius:50%;background:#6a7a8a"></div>
<div class="row" style="left:146px;top:848px;color:#000000">lively-whyline-example3.js</div>
<div class="row" style="left:500px;top:846px;color:#000000">file</div>
<div class="row" style="left:598.8px;top:846px;color:#000000">401</div>
<div class="a" style="left:122.45000000000002px;top:894.15px;width:21.7px;height:21.7px;border-radius:50%;background:#e1e0cc"></div>
<div class="row" style="left:146px;top:886px;color:#000000">lively-whyline-plugin.js</div>
<div class="row" style="left:500px;top:884px;color:#000000">file</div>
<div class="row" style="left:598.8px;top:884px;color:#000000">13705</div>
<div class="a" style="left:122.45000000000002px;top:932.15px;width:21.7px;height:21.7px;border-radius:50%;background:#e1e0cc"></div>
<div class="row" style="left:146px;top:924px;color:#000000">lively-whyline-tracing.js</div>
<div class="row" style="left:500px;top:922px;color:#000000">file</div>
<div class="row" style="left:598.8px;top:922px;color:#000000">21582</div>
<div class="a" style="left:122.45000000000002px;top:970.15px;width:21.7px;height:21.7px;border-radius:50%;background:#e1e0cc"></div>
<div class="row" style="left:146px;top:962px;color:#000000">lively-whyline.html</div>
<div class="row" style="left:500px;top:960px;color:#000000">file</div>
<div class="row" style="left:598.8px;top:960px;color:#000000">4051</div>
<div class="a" style="left:122.45000000000002px;top:1008.15px;width:21.7px;height:21.7px;border-radius:50%;background:#e1e0cc"></div>
<div class="row" style="left:146px;top:1000px;color:#000000">lively-whyline.js</div>
<div class="row" style="left:500px;top:998px;color:#000000">file</div>
<div class="row" style="left:598.8px;top:998px;color:#000000">13584</div>
<div class="a" style="left:122.45000000000002px;top:1046.15px;width:21.7px;height:21.7px;border-radius:50%;background:#e1e0cc"></div>
<div class="row" style="left:146px;top:1038px;color:#000000">proweb18-jsx-intro-complex.html</div>
<div class="row" style="left:500px;top:1036px;color:#000000">file</div>
<div class="row" style="left:598.8px;top:1036px;color:#000000">282</div>
<div class="a" style="left:122.45000000000002px;top:1084.15px;width:21.7px;height:21.7px;border-radius:50%;background:#e1e0cc"></div>
<div class="row" style="left:146px;top:1076px;color:#000000">proweb18-jsx-intro-complex.js</div>
<div class="row" style="left:500px;top:1074px;color:#000000">file</div>
<div class="row" style="left:598.8px;top:1074px;color:#000000">3113</div>
<div class="a" style="left:122.45000000000002px;top:1122.15px;width:21.7px;height:21.7px;border-radius:50%;background:#e1e0cc"></div>
<div class="row" style="left:146px;top:1114px;color:#000000">proweb18-jsx-intro.html</div>
<div class="row" style="left:500px;top:1112px;color:#000000">file</div>
<div class="row" style="left:598.8px;top:1112px;color:#000000">273</div>
<div class="a" style="left:122.45000000000002px;top:1160.15px;width:21.7px;height:21.7px;border-radius:50%;background:#e1e0cc"></div>
<div class="row" style="left:146px;top:1152px;color:#000000">proweb18-jsx-intro.js</div>
<div class="row" style="left:500px;top:1150px;color:#000000">file</div>
<div class="row" style="left:598.8px;top:1150px;color:#000000">1575</div>
<svg class="a" style="left:101px;top:1195px" width="16" height="18" viewBox="0 0 16 18"><path d="M0.5 0.5 L15.5 9 L0.5 17.5 Z" fill="#000"/></svg>
<div class="row" style="left:119px;top:1186px;color:#000000">draft</div>
<div class="row" style="left:500px;top:1186px;color:#000000">directory</div>
<div class="row" style="left:598.8px;top:1186px;color:#000000">0</div>
<svg class="a" style="left:101px;top:1229px" width="16" height="18" viewBox="0 0 16 18"><path d="M0.5 0.5 L15.5 9 L0.5 17.5 Z" fill="#000"/></svg>
<div class="row" style="left:119px;top:1220px;color:#000000">halo</div>
<div class="row" style="left:500px;top:1220px;color:#000000">directory</div>
<div class="row" style="left:598.8px;top:1220px;color:#000000">0</div>
<div class="a" style="left:101.65px;top:1266.15px;width:21.7px;height:21.7px;border-radius:50%;background:#e1e0cc"></div>
<div class="row" style="left:126px;top:1258px;color:#000000">index.html</div>
<div class="row" style="left:500px;top:1256px;color:#000000">file</div>
<div class="row" style="left:598.8px;top:1256px;color:#000000">331</div>
</div></div>
<div class="a" style="left:1067px;top:681px;width:13px;height:591px;background:#f1f1f1;"></div>
<div class="a" style="left:1068px;top:1017px;width:10px;height:118px;background:#c8c8c8;border-radius:3px;"></div>
<div class="a" style="left:58.5px;top:659.3px;width:17.0px;height:3.0px;background:#6f6f6f;border-radius:0.5px;"></div>
<div class="a" style="left:58.5px;top:664.9px;width:17.0px;height:3.0px;background:#6f6f6f;border-radius:0.5px;"></div>
<div class="a" style="left:58.5px;top:670.5px;width:17.0px;height:3.0px;background:#6f6f6f;border-radius:0.5px;"></div>
<div class="ttl" style="left:92px;top:654px;color:#3b4149">VivideView</div>
<svg class="a" style="left:977px;top:649px" width="106" height="28" viewBox="0 0 106 28"><rect x="3.3" y="20" width="19.3" height="5" rx="1.6" fill="#777777"/><rect x="42.5" y="10.1" width="16.7" height="13.8" rx="1" fill="none" stroke="#777777" stroke-width="2.2"/><rect x="41.4" y="9" width="18.9" height="5.0" rx="1" fill="#777777"/><path d="M82.8 11 L95.5 23.6 M95.5 11 L82.8 23.6" stroke="#777777" stroke-width="3.8"/></svg>
<div class="a" style="left:1291px;top:373px;width:974px;height:32px;background:#4b5a6a;"></div>
<div class="a" style="left:1293px;top:375px;width:970px;height:30px;background:#778899;"></div>
<div class="a" style="left:1299.2px;top:383px;width:18.0px;height:3px;background:#ffffff;border-radius:0.5px;"></div>
<div class="a" style="left:1299.2px;top:388.6px;width:18.0px;height:3.0px;background:#ffffff;border-radius:0.5px;"></div>
<div class="a" style="left:1299.2px;top:394.2px;width:18.0px;height:3.0px;background:#ffffff;border-radius:0.5px;"></div>
<div class="ttl" style="left:1333px;top:378px;color:#ffffff">VivideView</div>
<svg class="a" style="left:2159px;top:373px" width="106" height="28" viewBox="0 0 106 28"><rect x="3.3" y="20" width="19.3" height="5" rx="1.6" fill="#ffffff"/><rect x="42.9" y="10.5" width="15.899999999999999" height="13.0" rx="1" fill="none" stroke="#ffffff" stroke-width="3.0"/><rect x="41.4" y="9" width="18.9" height="6.0" rx="1" fill="#ffffff"/><path d="M82.8 11 L95.5 23.6 M95.5 11 L82.8 23.6" stroke="#ffffff" stroke-width="3.8"/></svg>
<div class="a" style="left:1293px;top:403px;width:976px;height:575px;background:#c6f7c6;border:3px solid rgba(0,120,20,0.62);border-top-color:#7cc27c;border-left-color:#7cc27c;box-sizing:border-box;box-shadow:1px 2px 6px rgba(0,0,0,0.3);"></div>
<div class="a" style="left:1296px;top:969px;width:970px;height:3px;background:#d2f8d2;"></div>
<div class="a" style="left:1296px;top:972px;width:970px;height:1px;background:#7aa87a;"></div>
<div class="a" style="left:1291px;top:373px;width:2px;height:600px;background:#4b5a6a;"></div>
<div class="a" style="left:1296px;top:406px;width:83px;height:563px;background:#c3f2c3;"></div>
<div class="a" style="left:1379px;top:406px;width:2px;height:563px;background:#b0dab0;"></div>
<div class="a" style="left:1296px;top:565px;width:951px;height:3px;background:#b0d8b0;"></div>
<div class="a" style="left:2247px;top:406px;width:1px;height:563px;background:#b0dab0;"></div>
<div class="a" style="left:2249px;top:406px;width:12px;height:563px;background:#bdeabd;border-radius:3px;"></div>
<div class="a" style="left:2249px;top:523px;width:12px;height:332px;background:#acdcac;border-radius:4px;"></div>
<div class="a" style="left:1296px;top:406px;width:951px;height:159px;overflow:hidden">
<div class="a" style="left:-1296px;top:-406px;width:2300px;height:600px">
<div class="cl" style="left:1292px;width:60px;text-align:right;top:400px;color:#98b898">9</div>
<div class="cl" style="left:1431px;top:400px"><span style="color:#3a9c9c;">result</span><span style="color:#2e5c2e;"> = String(</span><span style="color:#3a9c9c;">n</span><span style="color:#2e5c2e;"> % </span><span style="color:#3a9c9c;">base</span><span style="color:#2e5c2e;">) + </span><span style="color:#3a9c9c;">result</span><span style="color:#2e5c2e;">;</span></div>
<div class="cl" style="left:1292px;width:60px;text-align:right;top:423px;color:#98b898">10</div>
<div class="cl" style="left:1431px;top:423px"><span style="color:#3a9c9c;">n</span><span style="color:#2e5c2e;"> /= </span><span style="color:#3a9c9c;">base</span><span style="color:#2e5c2e;">;</span></div>
<div class="cl" style="left:1292px;width:60px;text-align:right;top:446px;color:#98b898">11</div>
<div class="cl" style="left:1409px;top:446px"><span style="color:#2e5c2e;">} </span><span style="color:#7b5f86;">while</span><span style="color:#2e5c2e;"> (</span><span style="color:#3a9c9c;">n</span><span style="color:#2e5c2e;"> &gt; </span><span style="color:#3d9e5e;">0</span><span style="color:#2e5c2e;">);</span></div>
<div class="cl" style="left:1292px;width:60px;text-align:right;top:469px;color:#98b898">12</div>
<div class="cl" style="left:1409px;top:469px"><span style="color:#7b5f86;">return</span><span style="color:#2e5c2e;"> </span><span style="color:#3a9c9c;">sign</span><span style="color:#2e5c2e;"> + </span><span style="color:#3a9c9c;">result</span><span style="color:#2e5c2e;">;</span></div>
<div class="cl" style="left:1292px;width:60px;text-align:right;top:492px;color:#98b898">13</div>
<div class="cl" style="left:1387px;top:492px"><span style="color:#2e5c2e;">}</span></div>
<div class="cl" style="left:1292px;width:60px;text-align:right;top:515px;color:#98b898">14</div>
<div class="cl" style="left:1292px;width:60px;text-align:right;top:538px;color:#98b898">15</div>
<div class="cl" style="left:1387px;top:538px"><span style="color:#7b5f86;">let</span><span style="color:#2e5c2e;"> </span><span style="color:#4468cc;">s</span><span style="color:#2e5c2e;"> = numberToString(</span><span style="color:#3d9e5e;">13</span><span style="color:#2e5c2e;">, </span><span style="color:#3d9e5e;">10</span><span style="color:#2e5c2e;">);</span></div>
</div></div>
<svg class="a" style="left:1360px;top:539px" width="18" height="19" viewBox="0 0 18 19"><path d="M9 1.2 Q9.8 1.2 10.4 2.2 L17 15.6 Q17.6 17.6 15.6 17.6 L2.4 17.6 Q0.4 17.6 1 15.6 L7.6 2.2 Q8.2 1.2 9 1.2 Z" fill="#d2d648"/><rect x="8.2" y="6" width="1.7" height="6.2" fill="#3d5a3d"/><rect x="8.2" y="13.3" width="1.7" height="1.8" fill="#3d5a3d"/></svg>
<svg class="a" style="left:1441px;top:554px" width="10" height="4" viewBox="0 0 10 4"><path d="M0 3 L2.5 1 L5 3 L7.5 1 L10 3" stroke="#d8d850" stroke-width="1" fill="none"/></svg>
<div class="cl" style="left:1292px;width:60px;text-align:right;top:576px;color:#98b898">1</div>
<div class="cl" style="left:1387px;top:576px"><span style="color:#7b5f86;">function</span><span style="color:#2e5c2e;"> </span><span style="color:#4468cc;">binary_search</span><span style="color:#2e5c2e;">(</span><span style="color:#4468cc;">key</span><span style="color:#2e5c2e;">, </span><span style="color:#4468cc;">array</span><span style="color:#2e5c2e;">){</span></div>
<div class="cl" style="left:1292px;width:60px;text-align:right;top:599px;color:#98b898">2</div>
<div class="cl" style="left:1409px;top:599px"><span style="color:#7b5f86;">var</span><span style="color:#2e5c2e;"> </span><span style="color:#4468cc;">low</span><span style="color:#2e5c2e;"> = </span><span style="color:#3d9e5e;">0</span></div>
<div class="cl" style="left:1292px;width:60px;text-align:right;top:622px;color:#98b898">3</div>
<div class="cl" style="left:1409px;top:622px"><span style="color:#7b5f86;">var</span><span style="color:#2e5c2e;"> </span><span style="color:#4468cc;">high</span><span style="color:#2e5c2e;"> = </span><span style="color:#3a9c9c;">array</span><span style="color:#2e5c2e;">.length - </span><span style="color:#3d9e5e;">1</span></div>
<div class="cl" style="left:1292px;width:60px;text-align:right;top:645px;color:#98b898">4</div>
<div class="cl" style="left:1292px;width:60px;text-align:right;top:668px;color:#98b898">5</div>
<div class="cl" style="left:1409px;top:668px"><span style="color:#7b5f86;">while</span><span style="color:#2e5c2e;">(</span><span style="color:#3a9c9c;">low</span><span style="color:#2e5c2e;"> &lt;= </span><span style="color:#3a9c9c;">high</span><span style="color:#2e5c2e;">)</span></div>
<div class="cl" style="left:1292px;width:60px;text-align:right;top:691px;color:#98b898">6</div>
<div class="cl" style="left:1409px;top:691px"><span style="color:#2e5c2e;">{</span></div>
<div class="cl" style="left:1292px;width:60px;text-align:right;top:714px;color:#98b898">7</div>
<div class="cl" style="left:1431px;top:714px"><span style="color:#7b5f86;">var</span><span style="color:#2e5c2e;"> </span><span style="color:#4468cc;">mid</span><span style="color:#2e5c2e;"> = Math.floor((</span><span style="color:#3a9c9c;">low</span><span style="color:#2e5c2e;"> + </span><span style="color:#3a9c9c;">high</span><span style="color:#2e5c2e;">) /</span><span style="color:#3d9e5e;">2</span><span style="color:#2e5c2e;">)</span></div>
<div class="cl" style="left:1292px;width:60px;text-align:right;top:737px;color:#98b898">8</div>
<div class="cl" style="left:1431px;top:737px"><span style="color:#7b5f86;">var</span><span style="color:#2e5c2e;"> </span><span style="color:#4468cc;">value</span><span style="color:#2e5c2e;"> = </span><span style="color:#3a9c9c;">array</span><span style="color:#2e5c2e;">[</span><span style="color:#3a9c9c;">mid</span><span style="color:#2e5c2e;">]</span></div>
<div class="cl" style="left:1292px;width:60px;text-align:right;top:760px;color:#98b898">9</div>
<div class="cl" style="left:1292px;width:60px;text-align:right;top:783px;color:#98b898">10</div>
<div class="cl" style="left:1431px;top:783px"><span style="color:#7b5f86;">if</span><span style="color:#2e5c2e;">(</span><span style="color:#3a9c9c;">value</span><span style="color:#2e5c2e;"> &lt;= </span><span style="color:#3a9c9c;">key</span><span style="color:#2e5c2e;">){</span></div>
<div class="cl" style="left:1292px;width:60px;text-align:right;top:806px;color:#98b898">11</div>
<div class="cl" style="left:1453px;top:806px"><span style="color:#3a9c9c;">low</span><span style="color:#2e5c2e;"> = </span><span style="color:#3a9c9c;">mid</span><span style="color:#2e5c2e;"> + </span><span style="color:#3d9e5e;">1</span></div>
<div class="cl" style="left:1292px;width:60px;text-align:right;top:829px;color:#98b898">12</div>
<div class="cl" style="left:1431px;top:829px"><span style="color:#2e5c2e;">}</span></div>
<div class="cl" style="left:1292px;width:60px;text-align:right;top:852px;color:#98b898">13</div>
<div class="cl" style="left:1431px;top:852px"><span style="color:#7b5f86;">else</span><span style="color:#2e5c2e;">{</span></div>
<div class="cl" style="left:1292px;width:60px;text-align:right;top:875px;color:#98b898">14</div>
<div class="cl" style="left:1292px;width:60px;text-align:right;top:898px;color:#98b898">15</div>
<div class="cl" style="left:1442px;top:898px"><span style="color:#7b5f86;">if</span><span style="color:#2e5c2e;"> (</span><span style="color:#3a9c9c;">value</span><span style="color:#2e5c2e;"> &gt; </span><span style="color:#3a9c9c;">key</span><span style="color:#2e5c2e;">) {</span></div>
<div class="cl" style="left:1292px;width:60px;text-align:right;top:921px;color:#98b898">16</div>
<div class="cl" style="left:1453px;top:921px"><span style="color:#3a9c9c;">high</span><span style="color:#2e5c2e;"> = </span><span style="color:#3a9c9c;">mid</span><span style="color:#2e5c2e;"> -</span><span style="color:#3d9e5e;">1</span></div>
<div class="cl" style="left:1292px;width:60px;text-align:right;top:944px;color:#98b898">17</div>
<div class="cl" style="left:1431px;top:944px"><span style="color:#2e5c2e;">}</span></div>
<div class="a" style="left:1126px;top:975px;width:32px;height:3px;background:#008000;"></div>
<div class="a" style="left:1155px;top:685px;width:3px;height:293px;background:#008000;"></div>
<div class="a" style="left:1155px;top:685px;width:622px;height:3px;background:#008000;"></div>
<div class="a" style="left:42px;top:670px;width:21px;height:21px;background:#7b7a9d;border:2.5px solid #000;box-sizing:border-box;"></div>
<div class="a" style="left:1073px;top:670px;width:21px;height:21px;background:#7b7a9d;border:2.5px solid #000;box-sizing:border-box;"></div>
<div class="a" style="left:42px;top:1266px;width:21px;height:21px;background:#7b7a9d;border:2.5px solid #000;box-sizing:border-box;"></div>
<div class="a" style="left:1073px;top:1266px;width:21px;height:21px;background:#7b7a9d;border:2.5px solid #000;box-sizing:border-box;"></div>
<div class="a" style="left:6px;top:634px;width:48px;height:48px;box-sizing:border-box;border:2.5px solid #808080;border-radius:9px;background:#d3d3d3"></div>
<svg class="a" style="left:10.0px;top:638.0px;overflow:visible" width="40" height="40" viewBox="-20 -20 40 40"><path d="M0.5 -11.8 L5 -6.4 L-4 -6.4 Z M0.5 12.3 L5 6.9 L-4 6.9 Z M-11.8 0.25 L-6.4 -4.25 L-6.4 4.75 Z M12.9 0.25 L7.5 -4.25 L7.5 4.75 Z" fill="#2f4f4f"/><rect x="-0.8" y="-6.6" width="2.6" height="13.7" fill="#2f4f4f"/><rect x="-6.6" y="-1.05" width="14.2" height="2.6" fill="#2f4f4f"/></svg>
<div class="a" style="left:491px;top:634px;width:48px;height:48px;box-sizing:border-box;border:2.5px solid #808080;border-radius:9px;background:#d3d3d3"></div>
<svg class="a" style="left:495.0px;top:638.0px;overflow:visible" width="40" height="40" viewBox="-20 -20 40 40"><path d="M-10.7 1.2 C-6.9 -7.9 7.9 -7.9 11.7 1.2 C7.9 10.3 -6.9 10.3 -10.7 1.2 Z" fill="none" stroke="#2f4f4f" stroke-width="1.8"/><circle cx="0.5" cy="-0.2" r="5.5" fill="#2f4f4f"/><path d="M-2.3 -1.2 A3 3 0 0 1 0.2 -3.6" stroke="#d3d3d3" stroke-width="1" fill="none"/></svg>
<div class="a" style="left:1079px;top:634px;width:48px;height:48px;box-sizing:border-box;border:2.5px solid #808080;border-radius:9px;background:#d3d3d3"></div>
<svg class="a" style="left:1083.0px;top:638.0px;overflow:visible" width="40" height="40" viewBox="-20 -20 40 40"><path d="M-7.1 -5.6 L5.9 7.4 M5.9 -5.6 L-7.1 7.4" stroke="#2f4f4f" stroke-width="3.6"/></svg>
<div class="a" style="left:6px;top:1271px;width:48px;height:48px;box-sizing:border-box;border:2.5px solid #808080;border-radius:9px;background:#d3d3d3"></div>
<svg class="a" style="left:10.0px;top:1275.0px;overflow:visible" width="40" height="40" viewBox="-20 -20 40 40"><rect x="-10.75" y="-11.05" width="17.2" height="17" rx="2" fill="none" stroke="#2f4f4f" stroke-width="1.7"/><rect x="-5.55" y="-5.55" width="17.4" height="17" rx="2" fill="#d3d3d3" stroke="#2f4f4f" stroke-width="1.7"/></svg>
<div class="a" style="left:543px;top:1271px;width:48px;height:48px;box-sizing:border-box;border:2.5px solid #808080;border-radius:9px;background:#d3d3d3"></div>
<svg class="a" style="left:547.0px;top:1275.0px;overflow:visible" width="40" height="40" viewBox="-20 -20 40 40"><path d="M1.5 0.5 L-8.0 8.6" stroke="#2f4f4f" stroke-width="4.4" stroke-linecap="round"/><circle cx="5.2" cy="-4" r="6.1" fill="#2f4f4f"/><circle cx="6.2" cy="-5.3" r="2.7" fill="#d3d3d3"/><path d="M5.2 -6.8 L9.8 -11.5 L12.5 -7.5 L7.6 -4.6 Z" fill="#d3d3d3"/><circle cx="-7" cy="7.9" r="0.9" fill="#d3d3d3"/></svg>
<div class="a" style="left:1079px;top:1271px;width:48px;height:48px;box-sizing:border-box;border:2.5px solid #808080;border-radius:9px;background:#d3d3d3"></div>
<svg class="a" style="left:1083.0px;top:1275.0px;overflow:visible" width="40" height="40" viewBox="-20 -20 40 40"><path d="M-10.9 -9.9 L-3.2 -9.9 L-10.9 -2.2 Z M10 10.8 L2.3 10.8 L10 3.1 Z" fill="#2f4f4f"/><path d="M-7.8 -6.8 L-1.2 -0.6 M0.8 1.6 L7 7.6" stroke="#2f4f4f" stroke-width="3.2"/></svg>
<div class="a" style="left:6px;top:929px;width:48px;height:47.5px;box-sizing:border-box;border:2.5px solid #0000ff;border-radius:9px;background:#add8e6"></div>
<svg class="a" style="left:10.0px;top:932.75px;overflow:visible" width="40" height="40" viewBox="-20 -20 40 40"><circle cx="-1" cy="-1" r="7.85" fill="none" stroke="#000080" stroke-width="3.3"/><path d="M5 5 L9.6 9.8" stroke="#000080" stroke-width="3.3" stroke-linecap="round"/></svg>
<div class="a" style="left:6px;top:977px;width:48px;height:48px;box-sizing:border-box;border:2.5px solid #0000ff;border-radius:9px;background:#add8e6"></div>
<svg class="a" style="left:10.0px;top:981.0px;overflow:visible" width="40" height="40" viewBox="-20 -20 40 40"><ellipse cx="0.45" cy="-8.5" rx="10.55" ry="4.1" fill="#000080"/><path d="M-10.1 -7.0 A10.55 4.1 0 0 0 11 -7.0 L11 -4.2 A10.55 4.1 0 0 1 -10.1 -4.2 Z" fill="#000080"/><path d="M-10.1 -1.7 A10.55 4.1 0 0 0 11 -1.7 L11 1.0999999999999999 A10.55 4.1 0 0 1 -10.1 1.0999999999999999 Z" fill="#000080"/><path d="M-10.1 3.6 A10.55 4.1 0 0 0 11 3.6 L11 6.4 A10.55 4.1 0 0 1 -10.1 6.4 Z" fill="#000080"/></svg>
<div class="a" style="left:1079px;top:905px;width:48px;height:47px;box-sizing:border-box;border:2.5px solid #008000;border-radius:9px;background:#90ee90"></div>
<svg class="a" style="left:1083.0px;top:908.5px;overflow:visible" width="40" height="40" viewBox="-20 -20 40 40"><circle cx="-1.6" cy="-1.3" r="7.95" fill="none" stroke="#006400" stroke-width="3.3"/><path d="M4.6 5 L9.8 10.5" stroke="#006400" stroke-width="3.3" stroke-linecap="round"/></svg>
<div class="a" style="left:1079px;top:953px;width:48px;height:47.5px;box-sizing:border-box;border:2.5px solid #008000;border-radius:9px;background:#90ee90"></div>
<svg class="a" style="left:1083.0px;top:956.75px;overflow:visible" width="40" height="40" viewBox="-20 -20 40 40"><path d="M-3 -8.2 L-8 -8.2 Q-9.8 -8.2 -9.8 -6.4 L-9.8 5.1 Q-9.8 6.9 -8 6.9 L-3 6.9" fill="none" stroke="#006400" stroke-width="1.8"/><path d="M-6 -3.7 L3 -3.7 L3 -8.5 L9.8 -0.7 L3 7.2 L3 2.3 L-6 2.3 Z" fill="#006400"/></svg>
<div class="a" style="left:1079px;top:1001px;width:48px;height:48px;box-sizing:border-box;border:2.5px solid #008000;border-radius:9px;background:#90ee90"></div>
<svg class="a" style="left:1083.0px;top:1005.0px;overflow:visible" width="40" height="40" viewBox="-20 -20 40 40"><path d="M-0.15 -10.7 V8 M-9.5 -1.35 H9.2" stroke="#006400" stroke-width="4.8"/></svg>
</body></html>
